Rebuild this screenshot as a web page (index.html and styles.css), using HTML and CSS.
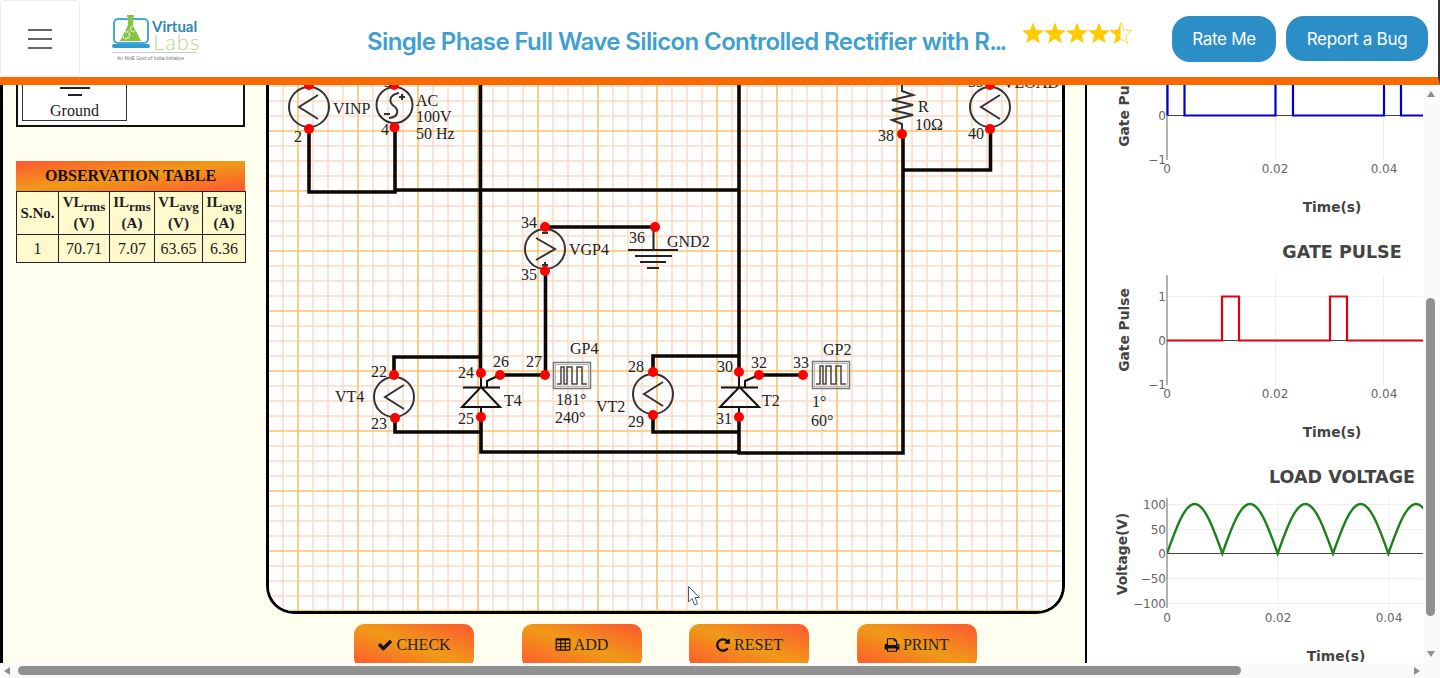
FILE: index.html
```html
<!DOCTYPE html>
<html lang="en">
<head>
<meta charset="utf-8">
<title>Single Phase Full Wave Silicon Controlled Rectifier with R-Load</title>
<link rel="stylesheet" href="styles.css">
</head>
<body>
<div class="app">
  <header class="topbar">
    <button class="menu-btn" aria-label="Menu"><span></span><span></span><span></span></button>
    <svg class="logo" width="88" height="50" viewBox="112 13 88 50">
      <rect x="114" y="19" width="34" height="24" rx="4" fill="none" stroke="#45abd6" stroke-width="2"/>
      <rect x="112" y="44" width="38" height="4" rx="2" fill="#2f9ccb"/>
      <path d="M127 15h7v2h-1v8l8 16h-21l8-16v-8h-1z" fill="#86c440"/>
      <circle cx="126" cy="35" r="3.6" fill="none" stroke="#fff" stroke-width="1.6" stroke-dasharray="1.5 1"/>
      <circle cx="133" cy="29" r="2.6" fill="none" stroke="#fff" stroke-width="1.4" stroke-dasharray="1.5 1"/>
      <text class="logo-virtual" x="152" y="32">Virtual</text>
      <text class="logo-labs" x="153" y="50">Labs</text>
      <line x1="112" y1="52.5" x2="197" y2="52.5" stroke="#ccc"/>
      <text class="logo-tag" x="117" y="60">An MoE Govt of India Initiative</text>
    </svg>
    <h1 class="page-title">Single Phase Full Wave Silicon Controlled Rectifier with R<span class="trail">...</span></h1>
    <svg class="stars" width="112" height="24" viewBox="0 0 112 24">
      <defs>
        <polygon id="star" points="0,-11.500 2.940,-4.050 10.940,-3.550 4.760,1.550 6.760,9.300 0,5 -6.760,9.300 -4.760,1.550 -10.940,-3.550 -2.940,-4.050"/>
        <clipPath id="half"><rect x="88" y="0" width="10.500" height="24"/></clipPath>
      </defs>
      <use href="#star" x="11" y="12" fill="#ffcb05"/>
      <use href="#star" x="33" y="12" fill="#ffcb05"/>
      <use href="#star" x="55" y="12" fill="#ffcb05"/>
      <use href="#star" x="77" y="12" fill="#ffcb05"/>
      <use href="#star" x="99" y="12" fill="#fff" stroke="#ffd84a" stroke-width="1"/>
      <g clip-path="url(#half)"><use href="#star" x="99" y="12" fill="#ffcb05"/></g>
    </svg>
    <button class="pill-btn rate-btn">Rate Me</button>
    <button class="pill-btn bug-btn">Report a Bug</button>
  </header>

  <main class="main">
    <section class="workspace">
      <aside class="side">
        <div class="legend">
          <div class="legend-item">
            <span class="gnd-long"></span>
            <span class="gnd-short"></span>
            <span class="legend-label">Ground</span>
          </div>
        </div>
        <div class="obs-title">OBSERVATION TABLE</div>
        <table class="obs-table">
          <colgroup>
            <col class="c1"><col class="c2"><col class="c3"><col class="c4"><col class="c5">
          </colgroup>
          <thead>
            <tr>
              <th>S.No.</th>
              <th>VL<sub>rms</sub><br>(V)</th>
              <th>IL<sub>rms</sub><br>(A)</th>
              <th>VL<sub>avg</sub><br>(V)</th>
              <th>IL<sub>avg</sub><br>(A)</th>
            </tr>
          </thead>
          <tbody>
            <tr><td>1</td><td>70.71</td><td>7.07</td><td>63.65</td><td>6.36</td></tr>
          </tbody>
        </table>
      </aside>

      <div class="bench">
        <div class="board">
          <svg class="circuit" width="793" height="526" viewBox="269 85 793 526">
            <rect x="269" y="85" width="793" height="526" fill="#fff"/>
            <path class="grid-minor" d="M283 85V611M313 85V611M328 85V611M343 85V611M373 85V611M388 85V611M403 85V611M433 85V611M448 85V611M463 85V611M493 85V611M508 85V611M523 85V611M553 85V611M568 85V611M583 85V611M613 85V611M628 85V611M642 85V611M672 85V611M687 85V611M702 85V611M732 85V611M747 85V611M762 85V611M792 85V611M807 85V611M822 85V611M852 85V611M867 85V611M882 85V611M912 85V611M927 85V611M942 85V611M972 85V611M987 85V611M1002 85V611M1032 85V611M1047 85V611M269 86H1062M269 101H1062M269 116H1062M269 146H1062M269 161H1062M269 176H1062M269 206H1062M269 221H1062M269 236H1062M269 266H1062M269 281H1062M269 296H1062M269 326H1062M269 341H1062M269 356H1062M269 386H1062M269 401H1062M269 416H1062M269 446H1062M269 461H1062M269 476H1062M269 506H1062M269 521H1062M269 536H1062M269 566H1062M269 581H1062M269 596H1062"/>
            <path class="grid-major" d="M298 85V611M358 85V611M418 85V611M478 85V611M538 85V611M598 85V611M657 85V611M717 85V611M777 85V611M837 85V611M897 85V611M957 85V611M1017 85V611M269 131H1062M269 191H1062M269 251H1062M269 311H1062M269 371H1062M269 431H1062M269 491H1062M269 551H1062M269 610.500H1062"/>

            <g class="wire">
              <path d="M309 129V192H395V128"/>
              <path d="M395 190H739"/>
              <path d="M480.500 85V375"/>
              <path d="M739 85V375"/>
              <path d="M394 375V357H480"/>
              <path d="M395 418V432H480"/>
              <path d="M481 417V452H739"/>
              <path d="M500 375H545"/>
              <path d="M545.500 375V271"/>
              <path d="M545 227H655"/>
              <path d="M653 372V356H739"/>
              <path d="M653 415V432H739"/>
              <path d="M739 417V453H903V134"/>
              <path d="M903 170H990.500V129"/>
              <path d="M759 375H803"/>
            </g>

            <g class="part">
              <circle cx="309" cy="107" r="20"/><path d="M318 95L299 107L318 119"/>
              <circle cx="394.500" cy="105" r="18"/><path d="M399 93C388 95 389 103 394 106C399 110 399 117 389 118"/>
              <path d="M399 97H405M402 94V100M384 114H390"/>
              <circle cx="394" cy="397" r="20"/><path d="M404 385L385 397L404 409"/>
              <circle cx="545" cy="249" r="20"/><path d="M536 238L555 249L536 260"/>
              <path d="M542 233H548M542 265H548M545 262V268"/>
              <circle cx="653" cy="394" r="20"/><path d="M663 382L644 394L663 406"/>
              <circle cx="990" cy="107" r="20"/><path d="M1000 95L981 107L1000 119"/>
              <path d="M902 85V91L913 95L892 100L913 105L892 110L913 115L892 120L902 124V134"/>
            </g>

            <g class="gnd">
              <path d="M653.500 228V250M628 250H678M635 256H672M640 262H666M647 268H659"/>
            </g>

            <g class="scr">
              <path d="M481 375V387M481 407V417M463 387.500H500M462 407H500L481 387ZM487 387V381L500 375"/>
              <path d="M739 375V387M739 407V417M721 387.500H758M720 407H759L739.500 387ZM745 387V381L759 375"/>
            </g>

            <g class="pulse">
              <rect class="pulse-box" x="553.500" y="362.500" width="37" height="26"/>
              <rect class="pulse-inner" x="555.500" y="364.500" width="33" height="22"/>
              <path d="M557 384H561V367H564V384H567V367H572V384H577V367H582V384H587"/>
              <rect class="pulse-box" x="812.500" y="361.500" width="37" height="27"/>
              <rect class="pulse-inner" x="814.500" y="363.500" width="33" height="23"/>
              <path d="M816 384H820V366H823V384H826V366H831V384H836V366H841V384H846"/>
            </g>

            <g class="node">
              <circle cx="309" cy="85" r="5"/><circle cx="309" cy="129" r="5"/>
              <circle cx="394" cy="85" r="5"/><circle cx="394.500" cy="127.500" r="5"/>
              <circle cx="902" cy="134" r="5"/><circle cx="990" cy="85" r="5"/><circle cx="990" cy="129" r="5"/>
              <circle cx="545" cy="227" r="5"/><circle cx="545" cy="271" r="5"/><circle cx="655" cy="227" r="5"/>
              <circle cx="394" cy="375" r="5"/><circle cx="395" cy="418" r="5"/>
              <circle cx="481" cy="373" r="5"/><circle cx="481" cy="417" r="5"/>
              <circle cx="500" cy="375" r="5"/><circle cx="545" cy="375" r="5"/>
              <circle cx="653" cy="372" r="5"/><circle cx="653" cy="415" r="5"/>
              <circle cx="739" cy="372" r="5"/><circle cx="739" cy="417" r="5"/>
              <circle cx="759" cy="375" r="5"/><circle cx="803" cy="375" r="5"/>
            </g>

            <g class="lbl">
              <text x="294" y="142">2</text><text x="333" y="114">VINP</text>
              <text x="384" y="87">3</text><text x="381" y="135">4</text>
              <text x="416" y="106">AC</text><text x="416" y="122">100V</text><text x="416" y="139">50 Hz</text>
              <text x="918" y="112">R</text><text x="915" y="130">10Ω</text><text x="878" y="141">38</text>
              <text x="968" y="139">40</text><text x="968" y="87">39</text><text x="1003" y="88">VLOAD</text>
              <text x="521" y="228">34</text><text x="521" y="280">35</text><text x="569" y="255">VGP4</text>
              <text x="629" y="243">36</text><text x="667" y="247">GND2</text>
              <text x="371" y="377">22</text><text x="371" y="429">23</text><text x="335" y="402">VT4</text>
              <text x="458" y="378">24</text><text x="458" y="424">25</text>
              <text x="493" y="367">26</text><text x="526" y="367">27</text>
              <text x="570" y="354">GP4</text><text x="504" y="406">T4</text>
              <text x="556" y="405">181°</text><text x="555" y="423">240°</text>
              <text x="596" y="412">VT2</text>
              <text x="628" y="372">28</text><text x="628" y="427">29</text>
              <text x="717" y="372">30</text><text x="716" y="424">31</text>
              <text x="751" y="368">32</text><text x="793" y="368">33</text>
              <text x="823" y="355">GP2</text><text x="762" y="406">T2</text>
              <text x="812" y="407">1°</text><text x="811" y="426">60°</text>
            </g>

            <path class="cursor" d="M688.500 586.500V602L692 598.500L694.500 605L697.500 603.800L695 597.500H699.500Z"/>
          </svg>
        </div>
        <div class="actions">
          <button class="action-btn">
            <svg class="fa" viewBox="0 0 1792 1792"><path d="M1671 566q0 40-28 68l-724 724-136 136q-28 28-68 28t-68-28l-136-136-362-362q-28-28-28-68t28-68l136-136q28-28 68-28t68 28l294 295 656-657q28-28 68-28t68 28l136 136q28 28 28 68z"/></svg>CHECK
          </button>
          <button class="action-btn">
            <svg class="fa" viewBox="0 0 1792 1792"><path d="M576 1376v-192q0-14-9-23t-23-9h-320q-14 0-23 9t-9 23v192q0 14 9 23t23 9h320q14 0 23-9t9-23zm0-384v-192q0-14-9-23t-23-9h-320q-14 0-23 9t-9 23v192q0 14 9 23t23 9h320q14 0 23-9t9-23zm512 384v-192q0-14-9-23t-23-9h-320q-14 0-23 9t-9 23v192q0 14 9 23t23 9h320q14 0 23-9t9-23zm-512-768v-192q0-14-9-23t-23-9h-320q-14 0-23 9t-9 23v192q0 14 9 23t23 9h320q14 0 23-9t9-23zm512 384v-192q0-14-9-23t-23-9h-320q-14 0-23 9t-9 23v192q0 14 9 23t23 9h320q14 0 23-9t9-23zm512 384v-192q0-14-9-23t-23-9h-320q-14 0-23 9t-9 23v192q0 14 9 23t23 9h320q14 0 23-9t9-23zm-512-768v-192q0-14-9-23t-23-9h-320q-14 0-23 9t-9 23v192q0 14 9 23t23 9h320q14 0 23-9t9-23zm512 384v-192q0-14-9-23t-23-9h-320q-14 0-23 9t-9 23v192q0 14 9 23t23 9h320q14 0 23-9t9-23zm0-384v-192q0-14-9-23t-23-9h-320q-14 0-23 9t-9 23v192q0 14 9 23t23 9h320q14 0 23-9t9-23zm128-320v1088q0 66-47 113t-113 47h-1344q-66 0-113-47t-47-113v-1088q0-66 47-113t113-47h1344q66 0 113 47t47 113z"/></svg>ADD
          </button>
          <button class="action-btn">
            <svg class="fa" viewBox="0 0 1792 1792"><path d="M1664 256v448q0 26-19 45t-45 19h-448q-42 0-59-40-17-39 14-69l138-138q-148-137-349-137-104 0-198.5 40.5t-163.5 109.5-109.5 163.5-40.5 198.5 40.5 198.5 109.5 163.5 163.5 109.5 198.5 40.5q119 0 225-52t179-147q7-10 23-12 15 0 25 9l137 138q9 8 9.5 20.5t-7.5 22.5q-109 132-264 204.5t-327 72.5q-156 0-298-61t-245-164-164-245-61-298 61-298 164-245 245-164 298-61q147 0 284.5 55.5t244.5 156.5l130-129q29-31 70-14 39 17 39 59z"/></svg>RESET
          </button>
          <button class="action-btn">
            <svg class="fa" viewBox="0 0 1792 1792"><path d="M448 1536h896v-256h-896v256zm0-640h896v-384h-160q-40 0-68-28t-28-68v-160h-640v640zm1152 64q0-26-19-45t-45-19-45 19-19 45 19 45 45 19 45-19 19-45zm128 0v416q0 13-9.5 22.5t-22.5 9.5h-224v160q0 40-28 68t-68 28h-960q-40 0-68-28t-28-68v-160h-224q-13 0-22.5-9.5t-9.5-22.5v-416q0-79 56.5-135.5t135.5-56.5h64v-544q0-40 28-68t68-28h672q40 0 88 20t76 48l152 152q28 28 48 76t20 88v256h64q79 0 135.5 56.5t56.5 135.5z"/></svg>PRINT
          </button>
        </div>
      </div>
    </section>

    <section class="plots">
      <svg class="plot" width="337" height="151" viewBox="1087 85 337 151">
        <path class="gridline" d="M1275.500 85V160M1383.500 85V160"/>
        <path class="zeroline" d="M1167 115.500H1423"/>
        <path class="axisline" d="M1167 85V160"/>
        <path class="trace-blue" d="M1167.500 85V115.500M1184.500 85V115.500H1275.500V85M1293 85V115.500H1384V85M1401 85V115.500H1423"/>
        <text class="tick" x="1166" y="120" text-anchor="end">0</text>
        <text class="tick" x="1166" y="164" text-anchor="end">−1</text>
        <text class="tick" x="1167" y="173" text-anchor="middle">0</text>
        <text class="tick" x="1275" y="173" text-anchor="middle">0.02</text>
        <text class="tick" x="1384" y="173" text-anchor="middle">0.04</text>
        <text class="axis-title" x="1332" y="212" text-anchor="middle">Time(s)</text>
        <text class="axis-title" text-anchor="middle" transform="translate(1129 105) rotate(-90)">Gate Pulse</text>
      </svg>

      <svg class="plot" width="337" height="225" viewBox="1087 236 337 225">
        <text class="plot-title" x="1342" y="258" text-anchor="middle">GATE PULSE</text>
        <path class="gridline" d="M1275.500 275V385M1383.500 275V385M1167 296.500H1423"/>
        <path class="zeroline" d="M1167 340.500H1423"/>
        <path class="axisline" d="M1167 275V385"/>
        <path class="trace-red" d="M1167 340.500H1222V296.500H1239V340.500H1330V296.500H1347V340.500H1423"/>
        <text class="tick" x="1166" y="301" text-anchor="end">1</text>
        <text class="tick" x="1166" y="345" text-anchor="end">0</text>
        <text class="tick" x="1166" y="389" text-anchor="end">−1</text>
        <text class="tick" x="1167" y="398" text-anchor="middle">0</text>
        <text class="tick" x="1275" y="398" text-anchor="middle">0.02</text>
        <text class="tick" x="1384" y="398" text-anchor="middle">0.04</text>
        <text class="axis-title" x="1332" y="437" text-anchor="middle">Time(s)</text>
        <text class="axis-title" text-anchor="middle" transform="translate(1129 330) rotate(-90)">Gate Pulse</text>
      </svg>

      <svg class="plot" width="337" height="201" viewBox="1087 461 337 201">
        <defs><clipPath id="plot-clip"><rect x="1167" y="495" width="256" height="115"/></clipPath></defs>
        <text class="plot-title" x="1342" y="483" text-anchor="middle">LOAD VOLTAGE</text>
        <path class="gridline" d="M1278 498V608M1389 498V608M1167 504.500H1423M1167 529.500H1423M1167 578.500H1423M1167 603.500H1423"/>
        <path class="zeroline" d="M1167 553.500H1423"/>
        <path class="axisline" d="M1167 498V608"/>
        <path class="trace-green" clip-path="url(#plot-clip)" d="M1167 553.500c9.020-25.360 17.650-49.500 27.670-49.500c10.020 0 18.650 24.140 27.670 49.500c9.020-25.360 17.650-49.500 27.670-49.500c10.020 0 18.650 24.140 27.670 49.500c9.020-25.360 17.650-49.500 27.670-49.500c10.020 0 18.650 24.140 27.670 49.500c9.020-25.360 17.650-49.500 27.670-49.500c10.020 0 18.650 24.140 27.670 49.500c9.020-25.360 17.650-49.500 27.670-49.500c10.020 0 18.650 24.140 27.670 49.500"/>
        <text class="tick" x="1166" y="509" text-anchor="end">100</text>
        <text class="tick" x="1166" y="534" text-anchor="end">50</text>
        <text class="tick" x="1166" y="558" text-anchor="end">0</text>
        <text class="tick" x="1166" y="583" text-anchor="end">−50</text>
        <text class="tick" x="1166" y="608" text-anchor="end">−100</text>
        <text class="tick" x="1167" y="622" text-anchor="middle">0</text>
        <text class="tick" x="1278" y="622" text-anchor="middle">0.02</text>
        <text class="tick" x="1389" y="622" text-anchor="middle">0.04</text>
        <text class="axis-title" x="1336" y="661" text-anchor="middle">Time(s)</text>
        <text class="axis-title" text-anchor="middle" transform="translate(1127 554) rotate(-90)">Voltage(V)</text>
      </svg>
    </section>

    <div class="vscroll">
      <span class="arrow-up"></span>
      <span class="vthumb"></span>
      <span class="arrow-down"></span>
    </div>
  </main>

  <div class="hscroll">
    <span class="arrow-left"></span>
    <span class="hthumb"></span>
    <span class="arrow-right"></span>
  </div>
</div>
</body>
</html>
```
FILE: styles.css
```css
* { box-sizing: border-box; }
html, body { margin: 0; padding: 0; height: 100%; overflow: hidden; background: #fff; }
button { font: inherit; cursor: pointer; }

.app { width: 1440px; height: 678px; display: flex; flex-direction: column; overflow: hidden; font-family: "Liberation Serif", serif; }

/* Header */
.topbar { flex: none; height: 85px; display: flex; align-items: flex-start; background: #fff; border-bottom: 8px solid #f96b02; border-right: 2px solid #333; }
.menu-btn { flex: none; width: 80px; height: 77px; padding: 0; display: flex; flex-direction: column; align-items: center; justify-content: center; gap: 7px; background: #fff; border: 1px solid #eee; border-radius: 4px; }
.menu-btn span { display: block; width: 24px; height: 2px; background: #666; }
.logo { flex: none; margin: 13px 0 0 32px; }
.logo-virtual { font: 700 15px "Lato", sans-serif; fill: #2f86ad; }
.logo-labs { font: 300 22px "Lato", sans-serif; fill: #b5d88c; letter-spacing: 1px; }
.logo-tag { font: 5px "Liberation Sans", sans-serif; fill: #777; }
.page-title { flex: none; width: 640px; margin: 25px 0 0 167px; font: 600 24px/34px "Inter", sans-serif; letter-spacing: -.62px; color: #3f9fd1; white-space: nowrap; overflow: hidden; }
.trail { letter-spacing: -2.500px; }
.stars { flex: none; margin: 22px 0 0 15px; }
.pill-btn { flex: none; margin-top: 16px; padding: 0; border: 0; border-radius: 18px; background: #2b8ec7; color: #fff; font: 400 17px "Inter", sans-serif; letter-spacing: -.3px; }
.rate-btn { width: 104px; height: 46px; margin-left: 38px; }
.bug-btn { width: 142px; height: 45px; margin-left: 10px; }

/* Main */
.main { flex: none; height: 578px; display: flex; overflow: hidden; }
.workspace { flex: none; width: 1087px; display: flex; background: #fffff0; border-left: 3px solid #000; border-right: 2px solid #000; }
.side { flex: none; width: 263px; padding-left: 13px; }
.legend { width: 229px; height: 42px; border: 2px solid #111; border-top: 0; padding-left: 4px; background: #fff; }
.legend-item { width: 105px; height: 36px; border: 1px solid #333; border-top: 0; display: flex; flex-direction: column; align-items: center; padding-top: 2px; }
.gnd-long { width: 30px; height: 2px; background: #222; }
.gnd-short { width: 14px; height: 2px; margin-top: 5px; background: #222; }
.legend-label { margin-top: 6px; font-size: 16px; line-height: 17px; color: #222; }

.obs-title { width: 229px; height: 30px; margin-top: 34px; background: linear-gradient(to bottom right, #ff5630, #ef9a17 50%, #ff5630); text-align: center; font-weight: 700; font-size: 16px; line-height: 30px; color: #1a0d00; }
.obs-table { width: 229px; table-layout: fixed; border-collapse: collapse; background: #fffacd; color: #222; font-size: 16px; }
.obs-table th, .obs-table td { padding: 0; border: 1px solid #222; text-align: center; }
.obs-table th { height: 43px; font-size: 15px; line-height: 21px; font-weight: 700; }
.obs-table td { height: 28px; }
.obs-table sub { font-size: 13px; line-height: 0; }
.c1 { width: 42px; } .c2 { width: 51px; } .c3 { width: 45px; } .c4 { width: 48px; } .c5 { width: 43px; }

.bench { flex: none; width: 799px; display: flex; flex-direction: column; }
.board { flex: none; height: 529px; background: #fff; border: 3px solid #000; border-top: 0; border-radius: 0 0 28px 28px; overflow: hidden; }
.circuit { display: block; }
.grid-minor { fill: none; stroke: #fcdcc8; stroke-width: 1.600; }
.grid-major { fill: none; stroke: #f6c66c; stroke-width: 1.600; }
.wire path { fill: none; stroke: #0d0805; stroke-width: 3.600; }
.part circle, .part path { fill: none; stroke: #333; stroke-width: 2; }
.gnd path { fill: none; stroke: #222; stroke-width: 2; }
.scr path { fill: none; stroke: #111; stroke-width: 2; }
.pulse path { fill: none; stroke: #444; stroke-width: 1.500; }
.pulse-box { fill: none; stroke: #777; stroke-width: 1.500; }
.pulse-inner { fill: none; stroke: #bbb; stroke-width: 1; }
.node circle { fill: #f00; }
.lbl text { font: 16px "Liberation Serif", serif; fill: #222; }
.cursor { fill: #fff; stroke: #4a5a78; stroke-width: 1; }

.actions { flex: none; display: flex; gap: 47.500px; margin: 10px 0 0 88px; }
.action-btn { flex: none; width: 120px; height: 44px; display: flex; align-items: center; justify-content: center; gap: 3px; padding: 0 0 2px; border: 0; border-radius: 10px; background: linear-gradient(to top right, #ff5630, #ef9a17 50%, #ff5630); font: 16px "Liberation Serif", serif; color: #222; }
.fa { width: 16px; height: 16px; fill: #111; }

/* Plots */
.plots { flex: none; width: 337px; display: flex; flex-direction: column; background: #fff; }
.plot { flex: none; display: block; }
.gridline { fill: none; stroke: #eee; stroke-width: 1; }
.zeroline { fill: none; stroke: #444; stroke-width: 1; }
.axisline { fill: none; stroke: #999; stroke-width: 1.500; }
.trace-blue { fill: none; stroke: #0000cc; stroke-width: 2.200; }
.trace-red { fill: none; stroke: #e00010; stroke-width: 2.200; }
.trace-green { fill: none; stroke: #1a801a; stroke-width: 2.400; }
.tick { font: 12px "DejaVu Sans", sans-serif; fill: #666; }
.axis-title { font: 700 13.800px "DejaVu Sans", sans-serif; fill: #444; }
.plot-title { font: 700 17.500px "DejaVu Sans", sans-serif; fill: #444; }

/* Scrollbars */
.vscroll { flex: none; width: 16px; display: flex; flex-direction: column; align-items: center; background: #fafafa; padding-right: 3px; }
.arrow-up { flex: none; width: 0; height: 0; margin-top: 6px; border: 4px solid transparent; border-top: 0; border-bottom: 6px solid #909090; }
.vthumb { flex: none; width: 9px; height: 318px; margin-top: 201px; border-radius: 5px; background: #909090; }
.arrow-down { flex: none; width: 0; height: 0; margin-top: 35px; border: 4px solid transparent; border-bottom: 0; border-top: 6px solid #909090; }
.hscroll { flex: none; height: 15px; display: flex; align-items: center; background: #fafafa; }
.arrow-left { flex: none; width: 0; height: 0; margin-left: 4px; border: 4px solid transparent; border-left: 0; border-right: 6px solid #909090; }
.hthumb { flex: none; width: 1223px; height: 9px; margin-left: 8px; border-radius: 5px; background: #909090; }
.arrow-right { flex: none; width: 0; height: 0; margin-left: auto; margin-right: 20px; border: 4px solid transparent; border-right: 0; border-left: 6px solid #909090; }
```
